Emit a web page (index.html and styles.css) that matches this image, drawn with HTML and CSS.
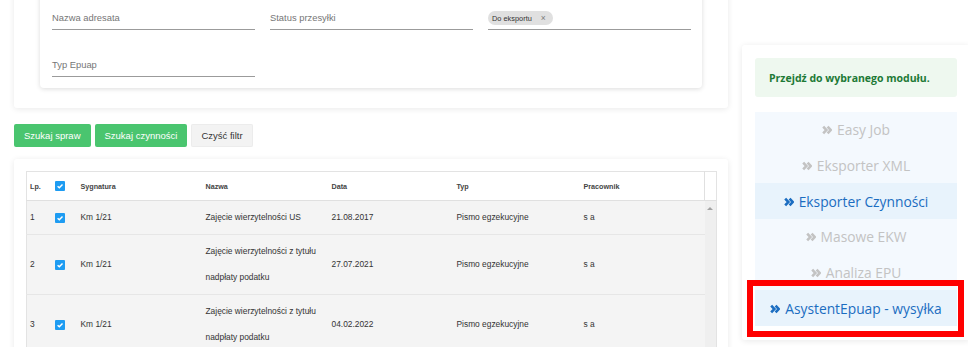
FILE: index.html
```html
<!DOCTYPE html>
<html lang="pl">
<head>
<meta charset="utf-8">
<title>Eksporter Czynności</title>
<link rel="stylesheet" href="styles.css">
</head>
<body>
<div class="page">
  <main class="left">
    <section class="card filters">
      <div class="inner">
        <div class="field-grid">
          <div class="field"><span class="label">Nazwa adresata</span></div>
          <div class="field"><span class="label">Status przesyłki</span></div>
          <div class="field chip-field"><span class="chip">Do eksportu<span class="chip-x">×</span></span></div>
          <div class="field"><span class="label">Typ Epuap</span></div>
        </div>
      </div>
    </section>

    <div class="actions">
      <button class="btn btn-green">Szukaj spraw</button>
      <button class="btn btn-green">Szukaj czynności</button>
      <button class="btn btn-light">Czyść filtr</button>
    </div>

    <section class="card table-card">
      <table class="grid">
        <colgroup>
          <col class="c-lp"><col class="c-cb"><col class="c-syg"><col class="c-naz"><col class="c-data"><col class="c-typ"><col class="c-prac"><col class="c-scroll">
        </colgroup>
        <thead>
          <tr>
            <th>Lp.</th>
            <th><span class="cb"><svg viewBox="0 0 10 10"><path d="M2.6 5.2 L4.3 6.8 L7.5 3.4"/></svg></span></th>
            <th>Sygnatura</th>
            <th>Nazwa</th>
            <th>Data</th>
            <th>Typ</th>
            <th>Pracownik</th>
            <th class="scroll-head"></th>
          </tr>
        </thead>
        <tbody>
          <tr>
            <td>1</td>
            <td><span class="cb"><svg viewBox="0 0 10 10"><path d="M2.6 5.2 L4.3 6.8 L7.5 3.4"/></svg></span></td>
            <td>Km 1/21</td>
            <td>Zajęcie wierzytelności US</td>
            <td>21.08.2017</td>
            <td>Pismo egzekucyjne</td>
            <td>s a</td>
            <td class="scrollbar" rowspan="3"><span class="arrow-up"></span></td>
          </tr>
          <tr>
            <td>2</td>
            <td><span class="cb"><svg viewBox="0 0 10 10"><path d="M2.6 5.2 L4.3 6.8 L7.5 3.4"/></svg></span></td>
            <td>Km 1/21</td>
            <td>Zajęcie wierzytelności z tytułu nadpłaty podatku</td>
            <td>27.07.2021</td>
            <td>Pismo egzekucyjne</td>
            <td>s a</td>
          </tr>
          <tr>
            <td>3</td>
            <td><span class="cb"><svg viewBox="0 0 10 10"><path d="M2.6 5.2 L4.3 6.8 L7.5 3.4"/></svg></span></td>
            <td>Km 1/21</td>
            <td>Zajęcie wierzytelności z tytułu nadpłaty podatku</td>
            <td>04.02.2022</td>
            <td>Pismo egzekucyjne</td>
            <td>s a</td>
          </tr>
        </tbody>
      </table>
    </section>
  </main>

  <aside class="right">
    <div class="card modules">
      <div class="alert">Przejdź do wybranego modułu.</div>
      <ul class="module-list">
        <li><svg class="chev" viewBox="0 0 10 10"><path d="M1.2 1.6 L4.4 5 L1.2 8.4 M5.6 1.6 L8.8 5 L5.6 8.4"/></svg>Easy Job</li>
        <li><svg class="chev" viewBox="0 0 10 10"><path d="M1.2 1.6 L4.4 5 L1.2 8.4 M5.6 1.6 L8.8 5 L5.6 8.4"/></svg>Eksporter XML</li>
        <li class="active"><svg class="chev" viewBox="0 0 10 10"><path d="M1.2 1.6 L4.4 5 L1.2 8.4 M5.6 1.6 L8.8 5 L5.6 8.4"/></svg>Eksporter Czynności</li>
        <li><svg class="chev" viewBox="0 0 10 10"><path d="M1.2 1.6 L4.4 5 L1.2 8.4 M5.6 1.6 L8.8 5 L5.6 8.4"/></svg>Masowe EKW</li>
        <li><svg class="chev" viewBox="0 0 10 10"><path d="M1.2 1.6 L4.4 5 L1.2 8.4 M5.6 1.6 L8.8 5 L5.6 8.4"/></svg>Analiza EPU</li>
        <li class="active marked"><svg class="chev" viewBox="0 0 10 10"><path d="M1.2 1.6 L4.4 5 L1.2 8.4 M5.6 1.6 L8.8 5 L5.6 8.4"/></svg>AsystentEpuap - wysyłka</li>
      </ul>
    </div>
  </aside>
</div>
</body>
</html>
```

FILE: styles.css
```css
html, body {
  margin: 0;
  padding: 0;
}

body {
  font-family: "Liberation Sans", Arial, sans-serif;
  background: #ffffff;
  color: #333333;
  height: 347px;
  overflow: hidden;
}

.page {
  display: flex;
  align-items: flex-start;
  gap: 14px;
  padding-left: 14px;
  height: 347px;
  overflow: hidden;
}

.left {
  width: 714px;
  flex: none;
}

.card {
  background: #ffffff;
  border-radius: 3px;
  box-shadow: 0 1px 6px rgba(0, 0, 0, 0.09);
}

/* ---------- filters ---------- */
.filters {
  margin-top: -20px;
  padding: 10px 26px 20px;
}

.inner {
  background: #ffffff;
  border-radius: 4px;
  box-shadow: 0 1px 5px rgba(0, 0, 0, 0.14);
  padding: 10px 11px 11px 12px;
}

.field-grid {
  display: grid;
  grid-template-columns: repeat(3, 203px);
  column-gap: 15px;
  row-gap: 17px;
}

.field {
  height: 30px;
  box-sizing: border-box;
  border-bottom: 1px solid #9b9b9b;
  display: flex;
  align-items: flex-end;
  padding-bottom: 5px;
}

.label {
  font-size: 9.4px;
  line-height: 12px;
  color: #767676;
}

.chip-field {
  padding-bottom: 4px;
}

.chip {
  display: inline-flex;
  align-items: center;
  height: 14px;
  padding: 0 7px 0 4px;
  background: #e0e0e0;
  border-radius: 7px;
  font-size: 7.4px;
  color: #333333;
}

.chip-x {
  margin-left: 9px;
  font-size: 8.5px;
  color: #7a7a7a;
}

/* ---------- actions ---------- */
.actions {
  display: flex;
  gap: 4px;
  margin-top: 16px;
}

.btn {
  height: 23px;
  padding: 0 10px;
  border: 0;
  border-radius: 2px;
  font-family: "Liberation Sans", Arial, sans-serif;
  font-size: 9.5px;
  cursor: pointer;
}

.btn-green {
  background: #4ac56f;
  color: #ffffff;
}

.btn-light {
  background: #f3f3f3;
  color: #333333;
  box-shadow: 0 0 0 1px #ececec inset;
}

/* ---------- table ---------- */
.table-card {
  margin-top: 12px;
  padding: 12px;
}

.grid {
  width: 690px;
  border-collapse: collapse;
  table-layout: fixed;
  border: 1px solid #e3e3e3;
}

.c-lp { width: 24px; }
.c-cb { width: 27px; }
.c-syg { width: 125px; }
.c-naz { width: 126px; }
.c-data { width: 125px; }
.c-typ { width: 127px; }
.c-prac { width: 124px; }
.c-scroll { width: 12px; }

.grid th {
  height: 28px;
  padding: 0 0 0 3px;
  text-align: left;
  font-size: 7.2px;
  font-weight: 700;
  color: #444444;
  background: #ffffff;
  border-bottom: 1px solid #e0e0e0;
}

.grid th.scroll-head {
  border-left: 1px solid #e0e0e0;
  padding: 0;
}

.grid td {
  padding: 3px 0 3px 3px;
  line-height: 26.5px;
  font-size: 8.4px;
  color: #333333;
  background: #f4f4f4;
  border-bottom: 1px solid #e6e6e6;
  vertical-align: middle;
}

.grid td.scrollbar {
  background: #efefef;
  vertical-align: top;
  padding: 0;
  text-align: center;
  border-bottom: 0;
  line-height: 0;
}

.arrow-up {
  display: inline-block;
  margin-top: 6px;
  width: 0;
  height: 0;
  border-left: 3px solid transparent;
  border-right: 3px solid transparent;
  border-bottom: 3px solid #a3a3a3;
}

.cb {
  display: inline-block;
  width: 10px;
  height: 10px;
  margin-left: 1px;
  background: #1e9cf2;
  border-radius: 1px;
  vertical-align: middle;
}

.cb svg {
  display: block;
  width: 10px;
  height: 10px;
  fill: none;
  stroke: #ffffff;
  stroke-width: 1.4;
}

/* ---------- right panel ---------- */
.right {
  width: 228px;
  flex: none;
  margin-top: 45px;
}

.modules {
  padding: 13px 13px 14px;
  font-family: "Open Sans", "Noto Sans", sans-serif;
}

.alert {
  height: 39px;
  box-sizing: border-box;
  display: flex;
  align-items: center;
  padding-left: 14px;
  background: #eef8ef;
  border-radius: 3px;
  color: #1d7a36;
  font-weight: 700;
  font-size: 10.5px;
}

.module-list {
  list-style: none;
  margin: 15px 0 0;
  padding: 0;
}

.module-list li {
  height: 35.7px;
  display: flex;
  align-items: center;
  justify-content: center;
  gap: 5px;
  background: #f4f9fe;
  color: #c3c3c3;
  font-size: 13.8px;
}

.module-list li.active {
  background: #e8f3fc;
  color: #1b6dc1;
}

.chev {
  width: 10px;
  height: 10px;
  fill: none;
  stroke: currentColor;
  stroke-width: 2.6;
  stroke-linejoin: miter;
  margin-top: 1px;
}

.marked {
  position: relative;
}

.marked::after {
  content: "";
  position: absolute;
  top: -10px;
  right: -7px;
  bottom: -11px;
  left: -8px;
  border: 6px solid #ff0000;
  pointer-events: none;
}
```
